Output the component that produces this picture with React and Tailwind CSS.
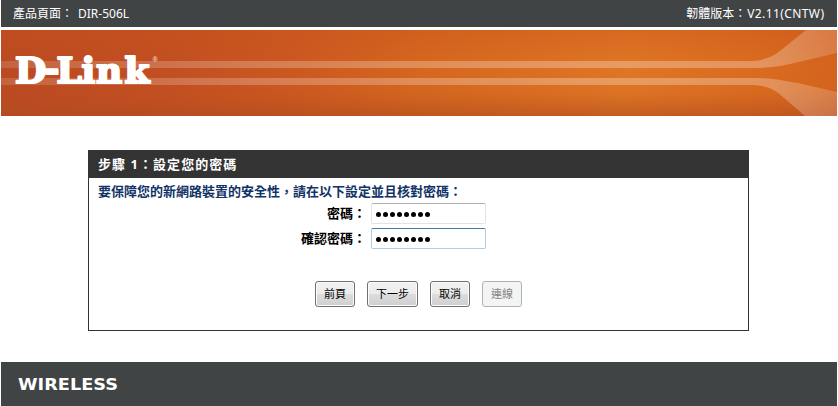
import React from "react";

const cjk = "font-['Noto_Sans','Noto_Sans_CJK_TC',sans-serif]";

function TopBar() {
  return (
    <div className="flex h-[27px] justify-between bg-[#404444] pl-3 pr-[13px] text-[12px] leading-[27px] text-white">
      <div className="flex whitespace-pre">
        <span className="w-[65px]">產品頁面：</span>
        <span>DIR-506L</span>
      </div>
      <div className="flex whitespace-pre">
        <span className="w-[61px]">韌體版本：</span>
        <span className="-mr-[0.4px] tracking-[0.4px]">V2.11(CNTW)</span>
      </div>
    </div>
  );
}

function Banner() {
  return (
    <svg className="mt-[3px] block h-[86px] w-[836px]" viewBox="0 0 836 86">
      <defs>
        <linearGradient id="base" x1="0" x2="1" y1="0" y2="0">
          <stop offset="0" stopColor="#bb4a22" />
          <stop offset="0.2" stopColor="#c24f21" />
          <stop offset="0.34" stopColor="#cb5720" />
          <stop offset="0.5" stopColor="#d5671f" />
          <stop offset="0.75" stopColor="#df7624" />
          <stop offset="0.9" stopColor="#da6c20" />
          <stop offset="1" stopColor="#d4641d" />
        </linearGradient>
        <linearGradient id="shade" x1="0" x2="0" y1="0" y2="1">
          <stop offset="0" stopColor="#c8521c" stopOpacity="0.35" />
          <stop offset="0.4" stopColor="#c8521c" stopOpacity="0" />
          <stop offset="0.72" stopColor="#b8501e" stopOpacity="0.06" />
          <stop offset="1" stopColor="#b04a20" stopOpacity="0.6" />
        </linearGradient>
        <linearGradient id="beam" x1="0" x2="836" y1="0" y2="0" gradientUnits="userSpaceOnUse">
          <stop offset="0" stopColor="#fff" stopOpacity="0.14" />
          <stop offset="0.3" stopColor="#fff" stopOpacity="0.23" />
          <stop offset="0.7" stopColor="#fff" stopOpacity="0.28" />
          <stop offset="0.92" stopColor="#fff" stopOpacity="0.27" />
          <stop offset="1" stopColor="#fff" stopOpacity="0.17" />
        </linearGradient>
      </defs>
      <rect width="836" height="86" fill="url(#base)" />
      <rect width="836" height="86" fill="url(#shade)" />
      <path
        d="M0 31H745C759 31 769 29 779 21L805 0H836V23L789 34C776 37 766 38 750 38H0Z"
        fill="url(#beam)"
      />
      <path
        d="M0 48H754C773 48 785 51 797 53L836 62V86H804L782 67C772 58 763 55 747 55H0Z"
        fill="url(#beam)"
      />
      <text
        x="14 43.5 55.5 80.5 95 123.5"
        y="53 51 53"
        fontSize="36"
        fontWeight="bold"
        fill="#fff"
        stroke="#fff"
        strokeWidth="2.2"
        strokeLinejoin="round"
        fontFamily="'DejaVu Serif', serif"
      >
        D-Link
      </text>
      <text x="151.5" y="32" fontSize="7" fontWeight="bold" fill="#fff" fillOpacity="0.75" fontFamily="'Liberation Sans', sans-serif">
        ®
      </text>
    </svg>
  );
}

function Field({ label, focused }) {
  return (
    <div className="flex h-[21px] items-center">
      <label className="w-[277px] whitespace-pre text-right text-[13px] font-bold leading-[21px] text-black">
        {label}
      </label>
      <div
        className={
          focused
            ? "ml-[5px] flex h-[21px] w-[115px] items-center gap-[2px] rounded-[2px] border border-[#a9cfe8] border-t-[#3d7bad] bg-white pl-[4px]"
            : "ml-[5px] flex h-[21px] w-[115px] items-center gap-[2px] rounded-[2px] border border-[#e2e3ea] border-t-[#abadb3] bg-white pl-[4px]"
        }
      >
        {Array.from({ length: 8 }, (_, i) => (
          <span key={i} className="mt-[2px] h-[5px] w-[5px] rounded-full bg-black" />
        ))}
      </div>
    </div>
  );
}

function Button({ children, className, disabled }) {
  return (
    <button
      disabled={disabled}
      className={
        (disabled
          ? "border-[#adb2b5] bg-[#f4f4f4] text-[#838383] "
          : "border-[#707070] bg-[linear-gradient(#f2f2f2,#ebebeb_50%,#dddddd_50%,#cfcfcf)] text-black shadow-[inset_0_0_0_1px_#fcfcfc] ") +
        "h-[26px] rounded-[3px] border text-center text-[11px] leading-[22px] whitespace-nowrap " +
        className
      }
    >
      {children}
    </button>
  );
}

export default function App() {
  return (
    <div className={"h-[406px] w-[838px] overflow-hidden bg-white px-px " + cjk}>
      <TopBar />
      <Banner />
      <main className="ml-[87px] mt-[34px] h-[181px] w-[661px] border border-[#333]">
        <h1 className="h-[27px] whitespace-pre bg-[#333] pl-[9px] text-[13px] font-bold leading-[27px] tracking-[1.05px] text-white">
          步驟 1：設定您的密碼
        </h1>
        <p className="h-[25px] whitespace-nowrap pl-[9px] text-[13px] font-bold leading-[26px] text-[#113366]">
          要保障您的新網路裝置的安全性，請在以下設定並且核對密碼：
        </p>
        <div className="flex flex-col gap-1">
          <Field label="密碼：" />
          <Field label="確認密碼：" focused />
        </div>
        <div className="ml-[226px] mt-8 flex gap-3">
          <Button className="w-[40px]">前頁</Button>
          <Button className="w-[51px]">下一步</Button>
          <Button className="w-[40px]">取消</Button>
          <Button className="w-[40px]" disabled>
            連線
          </Button>
        </div>
      </main>
      <footer className="mt-[31px] h-[44px] bg-[#404444]">
        <svg className="block h-[44px] w-[140px]" viewBox="0 0 140 44">
          <text
            x="17"
            y="27.5"
            textLength="100"
            lengthAdjust="spacingAndGlyphs"
            fontSize="15.5"
            fontWeight="bold"
            fill="#fff"
            fontFamily="'DejaVu Sans', sans-serif"
          >
            WIRELESS
          </text>
        </svg>
      </footer>
    </div>
  );
}
